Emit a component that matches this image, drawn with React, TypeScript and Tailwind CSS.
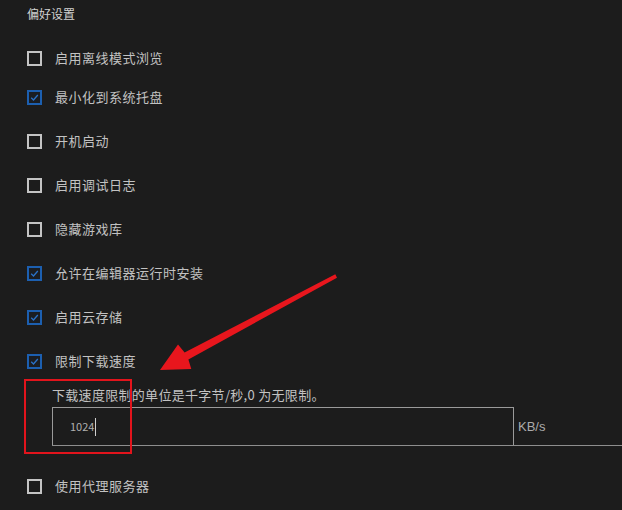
import { ReactNode } from "react";

const items = [
  { label: "启用离线模式浏览", checked: false, first: true },
  { label: "最小化到系统托盘", checked: true },
  { label: "开机启动", checked: false },
  { label: "启用调试日志", checked: false },
  { label: "隐藏游戏库", checked: false },
  { label: "允许在编辑器运行时安装", checked: true },
  { label: "启用云存储", checked: true },
  { label: "限制下载速度", checked: true },
];

function Checkbox({ checked }: { checked: boolean }) {
  if (checked) {
    return (
      <span className="flex h-[15px] w-[15px] shrink-0 items-center justify-center border-2 border-[#1c5fb0] bg-[#1a1d22]">
        <svg width="9" height="9" viewBox="0 0 9 9" fill="none">
          <path d="M1.2 4.8 L3.5 7 L7.8 2" stroke="#2a72c8" strokeWidth="1.3" />
        </svg>
      </span>
    );
  }
  return <span className="h-[15px] w-[15px] shrink-0 border-2 border-[#c4c4c4]" />;
}

function Row({ checked, children, className }: { checked: boolean; children: ReactNode; className?: string }) {
  return (
    <div className={`flex items-center gap-[13px] ${className ?? "h-[44px]"}`}>
      <Checkbox checked={checked} />
      <span className="text-[13px] tracking-[0.5px] text-[#c2c2c2]">{children}</span>
    </div>
  );
}

export default function App() {
  return (
    <div className="relative h-[510px] w-[622px] overflow-hidden bg-[#1c1c1c] font-['Noto_Sans_CJK_SC',sans-serif]">
      <div className="pl-[27px]">
        <div className="mb-[13px] h-[28px] text-[12px] leading-[28px] text-[#d2d2d2]">偏好设置</div>
        {items.map((item) => (
          <Row key={item.label} checked={item.checked} className={item.first ? "h-[34px]" : "h-[44px]"}>
            {item.label}
          </Row>
        ))}
        <div className="mt-[4px] pl-[25px] text-[13px] leading-[16px] tracking-[0.3px] text-[#c2c2c2]">
          下载速度限制的单位是千字节/秒,0 为无限制。
        </div>
        <div className="mt-[4px] ml-[25px] flex items-stretch border-b border-[#8e8e8e]">
          <div className="flex h-[38px] w-[462px] items-center border-l border-t border-r border-[#9a9a9a] pl-[17px]">
            <span className="text-[11px] text-[#b0b0b0]">1024</span>
            <span className="ml-[1px] h-[18px] w-px bg-[#d0d0d0]" />
          </div>
          <span className="ml-[4px] self-center pt-[2px] font-['Liberation_Sans',sans-serif] text-[13px] text-[#ababab]">KB/s</span>
        </div>
        <Row checked={false} className="mt-[18px] h-[44px]">
          使用代理服务器
        </Row>
      </div>

      {/* annotation overlay */}
      <div className="absolute left-[24px] top-[379px] h-[75px] w-[108px] border-2 border-[#e2141c]" />
      <svg className="absolute left-0 top-0" width="622" height="510" viewBox="0 0 622 510">
        <polygon
          points="160,370 178,344.5 184.6,352.4 335.3,274.3 337,277.7 188.4,359.4 191.3,369.1"
          fill="#e8161d"
        />
      </svg>
    </div>
  );
}
